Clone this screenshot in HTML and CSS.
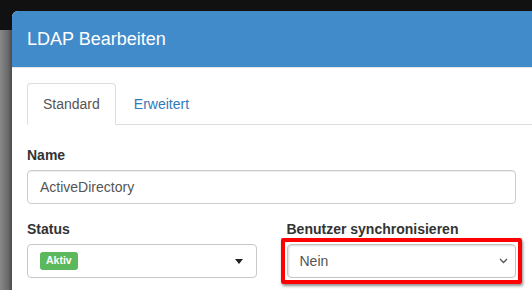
FILE: index.html
```html
<!DOCTYPE html>
<html lang="de">
	<head>
		<meta charset="UTF-8">
		<meta name="viewport" content="width=device-width, initial-scale=1.0">
		<title>LDAP Bearbeiten</title>

		<link rel="stylesheet" href="styles.css">
	</head>

	<body>
		<div class="modal">
			<div class="modal-header">
				<h4 class="modal-title">LDAP Bearbeiten</h4>
			</div>

			<div class="modal-body">
				<ul class="nav-tabs">
					<li class="active"><a>Standard</a></li>
					<li><a>Erweitert</a></li>
				</ul>

				<div class="tab-content">
					<div class="form-group">
						<label>Name</label>
						<div class="form-control">ActiveDirectory</div>
					</div>

					<div class="row">
						<div class="col">
							<label>Status</label>
							<div class="form-control select2">
								<span class="badge-success">Aktiv</span>
								<span class="caret"></span>
							</div>
						</div>

						<div class="col">
							<label>Benutzer synchronisieren</label>
							<div class="highlight">
								<div class="form-control select">
									<span>Nein</span>
									<svg class="chevron" width="9" height="6" viewBox="0 0 9 6">
										<polyline points="1,1 4.5,4.5 8,1" fill="none" stroke="#555" stroke-width="1.3"/>
									</svg>
								</div>
							</div>
						</div>
					</div>
				</div>
			</div>
		</div>
	</body>
</html>
```

FILE: styles.css
```css
body {
	margin: 0;
	height: 290px;
	overflow: hidden;
	font-family: "Liberation Sans", Arial, sans-serif;
	font-size: 14px;
	line-height: 20px;
	color: #333;
	background:
		linear-gradient(#111 0 30px, transparent 30px),
		linear-gradient(to right, #888 0, #6a6a6a 8px, #4a4a4a 12px);
	padding-top: 11px;
	box-sizing: border-box;
}

.modal {
	margin-left: 12px;
	background: #fff;
	border-radius: 6px 0 0 0;
	overflow: hidden;
	height: 100%;
}

.modal-header {
	background: #428bca;
	color: #fff;
	padding: 18px 15px;
	border-bottom: 1px solid #e5e5e5;
}

.modal-title {
	margin: 0;
	font-size: 18px;
	font-weight: normal;
	line-height: 20px;
}

.modal-body {
	padding: 15px 0 0 15px;
}

.nav-tabs {
	list-style: none;
	margin: 0;
	padding: 0;
	display: flex;
	border-bottom: 1px solid #ddd;
}

.nav-tabs li {
	margin-right: 2px;
	margin-bottom: -1px;
}

.nav-tabs a {
	display: block;
	padding: 10px 15px;
	border: 1px solid transparent;
	border-radius: 4px 4px 0 0;
	color: #337ab7;
}

.nav-tabs li.active a {
	color: #555;
	background: #fff;
	border-color: #ddd #ddd transparent;
}

.tab-content {
	padding: 20px 16px 0 0;
}

label {
	display: block;
	font-weight: bold;
	margin-bottom: 5px;
}

.form-group {
	margin-bottom: 15px;
}

.form-control {
	height: 34px;
	box-sizing: border-box;
	padding: 6px 12px;
	border: 1px solid #ccc;
	border-radius: 4px;
	color: #555;
	box-shadow: inset 0 1px 1px rgba(0, 0, 0, 0.075);
	display: flex;
	align-items: center;
}

.row {
	display: grid;
	grid-template-columns: 1fr 1fr;
	column-gap: 30px;
}

.select2 {
	justify-content: space-between;
	box-shadow: none;
	border-color: #c8c8c8;
}

.badge-success {
	background: #5cb85c;
	color: #fff;
	font-weight: bold;
	font-size: 10.5px;
	line-height: 1;
	padding: 3px 6px 4px;
	border-radius: 3px;
}

.caret {
	width: 0;
	height: 0;
	border-top: 5px solid #222;
	border-left: 4px solid transparent;
	border-right: 4px solid transparent;
	margin-right: 1px;
}

.select {
	justify-content: space-between;
	padding-right: 7px;
	border-color: #c4c4c4;
	box-shadow: inset 1px 1px 2px rgba(0, 0, 0, 0.15);
}

/* annotation frame around the select, keeps the select where it was */
.highlight {
	margin: -6px -6px -6px -6px;
	padding: 2px;
	border: 4px solid #f00;
	border-radius: 2px;
	box-shadow: 1px 2px 3px rgba(0, 0, 0, 0.45);
}
```
